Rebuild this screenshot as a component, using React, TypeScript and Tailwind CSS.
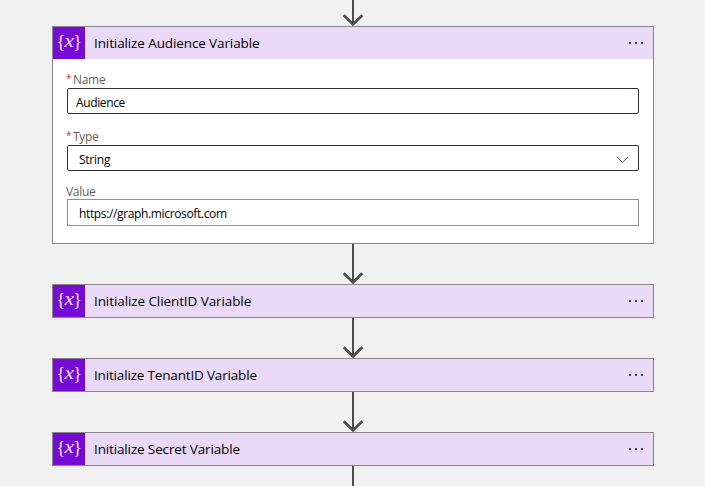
import React from 'react';

function VariableIcon() {
  return (
    <svg className="block h-8 w-8 shrink-0 bg-[#770bd6]" viewBox="0 0 32 32" fill="#f0e2fc" fontFamily="'Liberation Serif', serif">
      <text x="3.4" y="20.8" fontSize="18">{'{'}</text>
      <text x="11.5" y="20" fontSize="19" fontStyle="italic" textLength="9.4" lengthAdjust="spacingAndGlyphs">x</text>
      <text x="20.2" y="20.8" fontSize="18">{'}'}</text>
    </svg>
  );
}

function Header({ title, tracking }: { title: string; tracking: string }) {
  return (
    <div className="flex h-8 items-center bg-[#ebdaf7]">
      <VariableIcon />
      <span className={`ml-[9px] flex-1 whitespace-nowrap text-[13.5px] leading-8 text-black ${tracking}`}>{title}</span>
      <svg className="mr-[8px] h-4 w-[17px]" viewBox="0 0 17 16" fill="#454050">
        <rect x="1" y="7" width="2" height="2" />
        <rect x="7" y="7" width="2" height="2" />
        <rect x="13" y="7" width="2" height="2" />
      </svg>
    </div>
  );
}

function Arrow() {
  return (
    <svg className="block h-10 w-[22px] shrink-0" viewBox="0 0 22 40" fill="none" stroke="#4d4d4d" strokeWidth="2">
      <path d="M11 0V38" />
      <path d="M1.7 29.3L11 38.3L20.3 29.3" strokeWidth="2.7" />
    </svg>
  );
}

function Label({ text, required }: { text: string; required?: boolean }) {
  return (
    <div className="-ml-px flex h-[17px] items-center text-[12px] leading-[17px] tracking-[-0.3px] text-[#605e5c]">
      {required && <span className="mr-[2px] w-[5px] pb-[2px] text-[10px] text-[#d8303c]">*</span>}
      <span>{text}</span>
    </div>
  );
}

function Card({ title, tracking, children }: { title: string; tracking: string; children?: React.ReactNode }) {
  return (
    <section className="w-[602px] shrink-0 border border-[#8a8588] bg-white">
      <Header title={title} tracking={tracking} />
      {children}
    </section>
  );
}

export default function App() {
  return (
    <main className="flex h-[486px] w-[705px] flex-col items-center overflow-hidden bg-[#f1f1f1] pl-px font-['Open_Sans','Noto_Sans',sans-serif]">
      <div className="flex h-[26px] shrink-0 items-end overflow-hidden">
        <Arrow />
      </div>
      <Card title="Initialize Audience Variable" tracking="tracking-[-0.11px]">
        <div className="px-[14px] pt-3 pb-[17px] text-[12px] text-black">
          <Label text="Name" required />
          <div className="flex h-[26px] items-center rounded-[2px] border border-[#323130] px-2 pt-[3px] tracking-[-0.38px]">Audience</div>
          <div className="h-[14px]" />
          <Label text="Type" required />
          <div className="flex h-[26px] items-center justify-between rounded-[2px] border border-[#323130] pr-[9px] pl-[11px]">
            <span className="pt-[3px] tracking-[-0.25px]">String</span>
            <svg className="mt-[3px] h-[8px] w-[13px]" viewBox="0 0 13 8" fill="none" stroke="#605e6c">
              <path d="M1 1L6.5 6.5L12 1" />
            </svg>
          </div>
          <div className="h-3" />
          <Label text="Value" />
          <div className="-mt-px flex h-[27px] items-center border border-[#929292] px-[11px] pt-[2px] tracking-[-0.36px]">https://graph.microsoft.com</div>
        </div>
      </Card>
      <Arrow />
      <Card title="Initialize ClientID Variable" tracking="tracking-[-0.09px]" />
      <Arrow />
      <Card title="Initialize TenantID Variable" tracking="tracking-[-0.17px]" />
      <Arrow />
      <Card title="Initialize Secret Variable" tracking="tracking-[-0.14px]" />
      <div className="h-5 w-[2px] shrink-0 bg-[#4d4d4d]" />
    </main>
  );
}
